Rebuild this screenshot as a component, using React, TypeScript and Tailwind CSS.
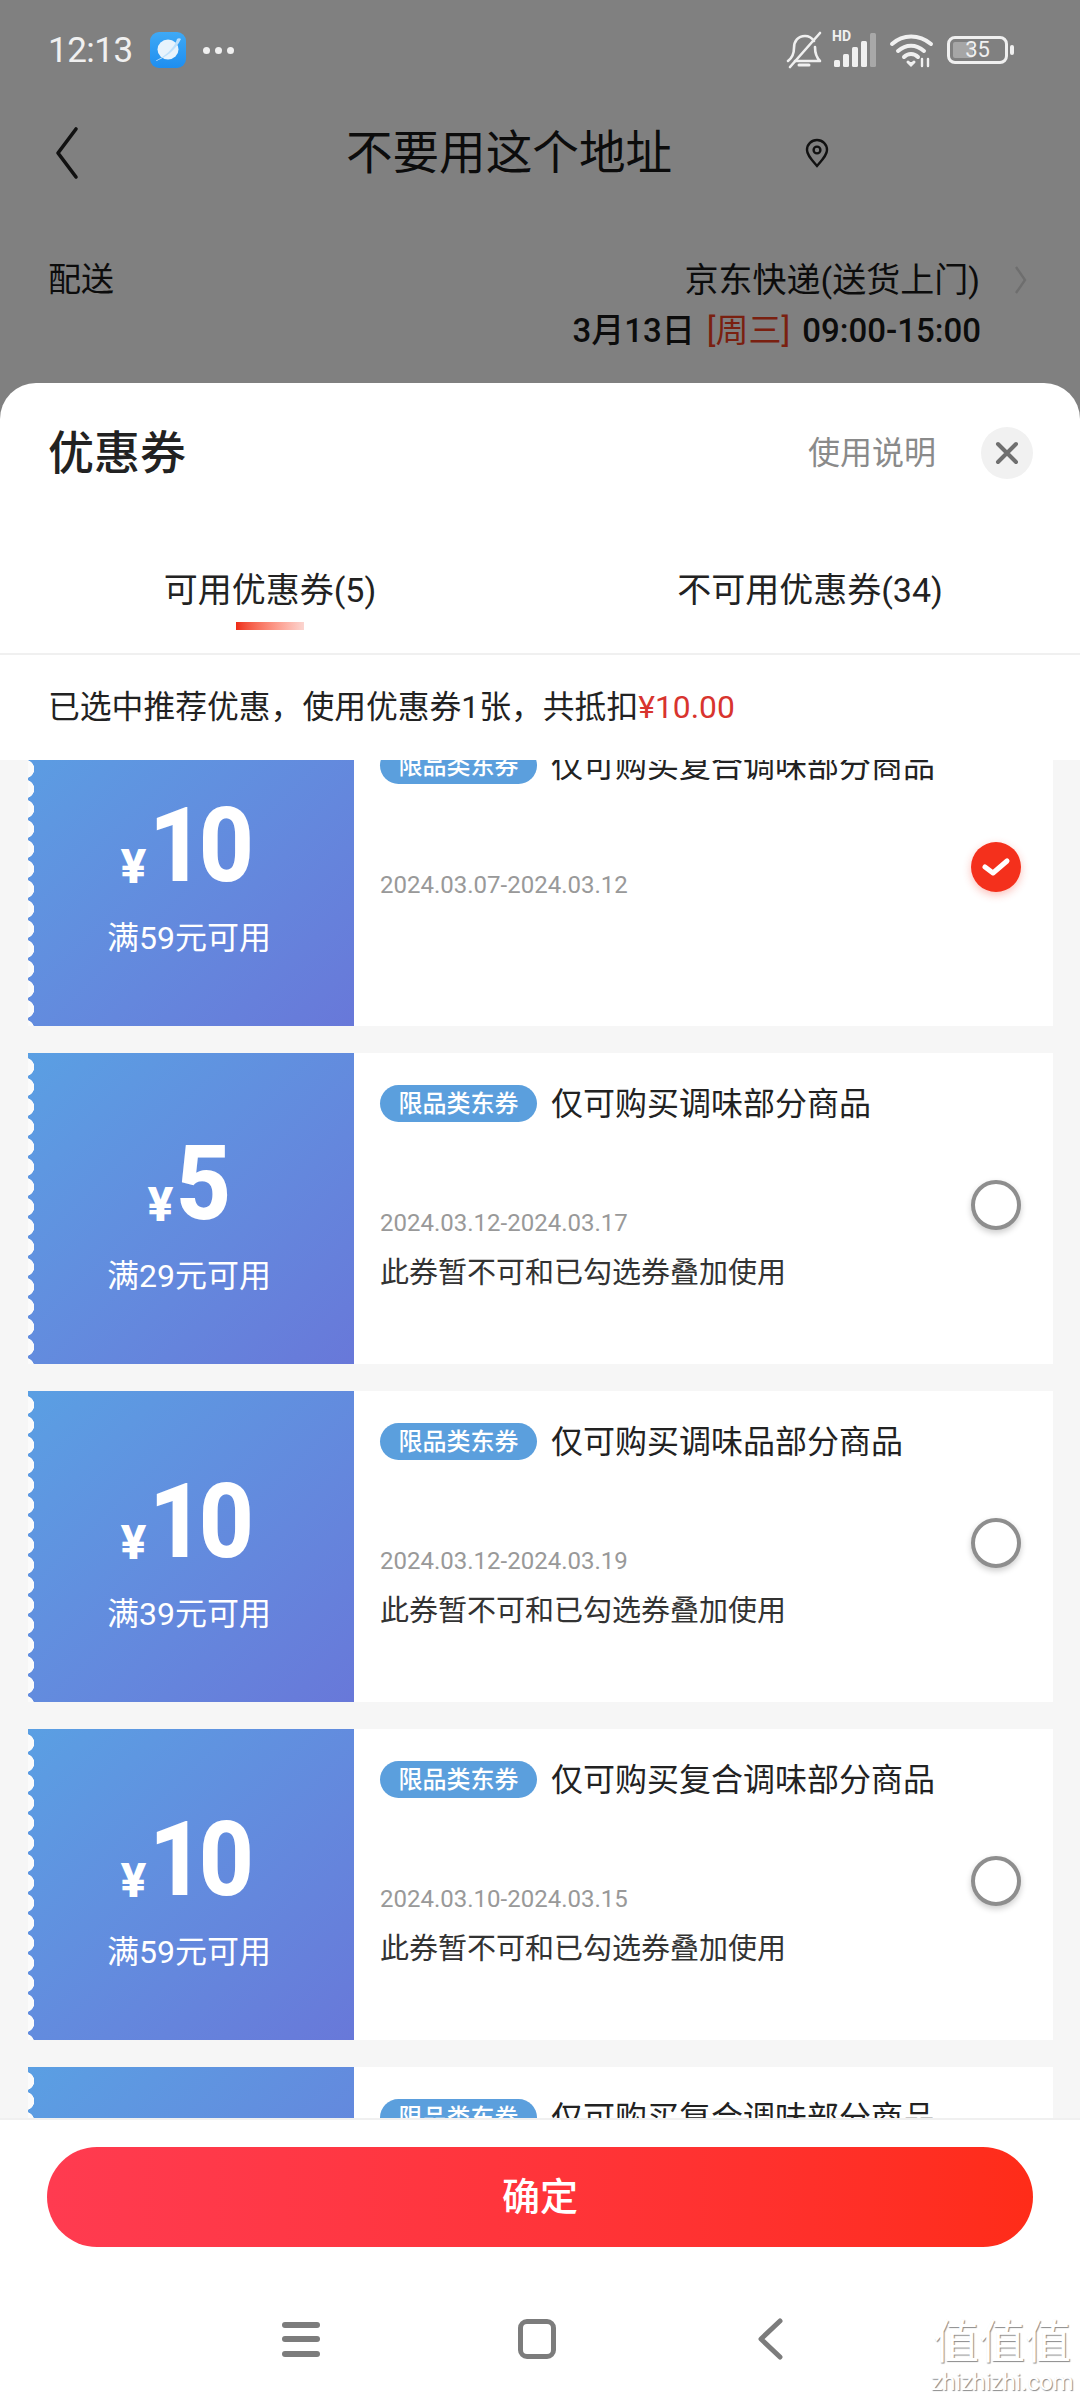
import React from "react";

const coupons = [
  { amount: "10", min: "满59元可用", title: "仅可购买复合调味部分商品", date: "2024.03.07-2024.03.12", note: "", checked: true },
  { amount: "5", min: "满29元可用", title: "仅可购买调味部分商品", date: "2024.03.12-2024.03.17", note: "此券暂不可和已勾选券叠加使用", checked: false },
  { amount: "10", min: "满39元可用", title: "仅可购买调味品部分商品", date: "2024.03.12-2024.03.19", note: "此券暂不可和已勾选券叠加使用", checked: false },
  { amount: "10", min: "满59元可用", title: "仅可购买复合调味部分商品", date: "2024.03.10-2024.03.15", note: "此券暂不可和已勾选券叠加使用", checked: false },
  { amount: "10", min: "满59元可用", title: "仅可购买复合调味部分商品", date: "2024.03.10-2024.03.15", note: "此券暂不可和已勾选券叠加使用", checked: false },
];

function StatusBar() {
  return (
    <div className="flex h-[100px] items-center justify-between pl-[48px] pr-[66px] text-[#f0f0f0]">
      <div className="flex items-center">
        <span className="text-[35px] leading-none tracking-[-0.5px]">12:13</span>
        <svg className="ml-[17px]" width="36" height="36" viewBox="0 0 36 36">
          <defs>
            <linearGradient id="pl" x1="0" y1="0" x2="0" y2="1">
              <stop offset="0" stopColor="#3fa9f5" />
              <stop offset="1" stopColor="#1e8ef0" />
            </linearGradient>
          </defs>
          <rect width="36" height="36" rx="9" fill="url(#pl)" />
          <ellipse cx="18" cy="17.5" rx="10.5" ry="10" fill="#e8f3fc" />
          <path d="M5 29 C14 27 26 18 31 7 C30 6 28 6 27 7 C25 16 14 25 5 29Z" fill="#bfe0fa" />
        </svg>
        <div className="ml-[17px] flex gap-[5px]">
          <span className="h-[7px] w-[7px] rounded-full bg-[#f0f0f0]" />
          <span className="h-[7px] w-[7px] rounded-full bg-[#f0f0f0]" />
          <span className="h-[7px] w-[7px] rounded-full bg-[#f0f0f0]" />
        </div>
      </div>
      <div className="flex items-center">
        <svg width="38" height="38" viewBox="0 0 38 38" fill="none" stroke="#f0f0f0" strokeWidth="2.6" strokeLinecap="round" strokeLinejoin="round">
          <path d="M3 30 C7 27 9 24 9 17 C9 10 13 5 20 5 C24 5 27 7 29 10" />
          <path d="M30 16 C30 24 32 27 35 30 L10 30" />
          <path d="M14 34 H24" strokeWidth="3" />
          <path d="M5 36 L35 2" />
        </svg>
        <div className="relative ml-[9px] h-[36px] w-[46px]">
          <span className="absolute left-0 top-[-4px] text-[14px] font-bold leading-[16px]">HD</span>
          <svg className="absolute left-0 top-0" width="46" height="36" viewBox="0 0 46 36" fill="#f0f0f0">
            <rect x="2" y="28" width="6" height="7" rx="1.5" />
            <rect x="11" y="22" width="6" height="13" rx="1.5" />
            <rect x="20" y="15" width="6" height="20" rx="1.5" />
            <rect x="29" y="9" width="6" height="26" rx="1.5" />
            <rect x="38" y="1" width="6" height="34" rx="1.5" fill="#a8a8a8" />
          </svg>
        </div>
        <svg className="ml-[11px]" width="46" height="36" viewBox="0 0 46 36" fill="none" stroke="#f0f0f0" strokeWidth="4" strokeLinecap="round">
          <path d="M3 12 C14 2 30 2 42 12" />
          <path d="M9 19 C17 12 27 12 35 19" />
          <path d="M15 25 C19 21 25 21 29 25" />
          <path d="M19 30 L22 33 L25 30" fill="#f0f0f0" strokeWidth="3" />
          <path d="M33 27 V34 M39 27 V34" strokeWidth="2.4" />
        </svg>
        <div className="ml-[12px] flex items-center">
          <div className="relative flex h-[28px] w-[61px] items-center justify-center overflow-hidden rounded-[8px] border-[3px] border-[#f0f0f0]">
            <span className="absolute bottom-[3px] left-[3px] top-[3px] w-[20px] rounded-[2px] bg-[#a6a6a6]" />
            <span className="relative text-[22px] leading-none">35</span>
          </div>
          <span className="ml-[2px] h-[10px] w-[4px] rounded-[2px] bg-[#f0f0f0]" />
        </div>
      </div>
    </div>
  );
}

function PageBehind() {
  return (
    <div className="h-[283px] shrink-0 text-[#0c0c0c]">
      <div className="relative flex h-[106px] items-center justify-center">
        <svg className="absolute left-[52px] top-[26px]" width="30" height="54" viewBox="0 0 30 54" fill="none" stroke="#111" strokeWidth="3.6" strokeLinecap="round" strokeLinejoin="round">
          <path d="M24 3 L6 27 L24 51" />
        </svg>
        <span className="mr-[62px] text-[46.6px] leading-none">不要用这个地址</span>
        <svg className="absolute left-[803px] top-[38px]" width="28" height="30" viewBox="0 0 28 30" fill="none" stroke="#111" strokeWidth="2.4">
          <path d="M14 28 C8 21 4 17 4 12 A10 10 0 0 1 24 12 C24 17 20 21 14 28Z" />
          <circle cx="14" cy="12" r="3.4" />
        </svg>
      </div>
      <div className="flex items-start justify-between pl-[48px] pr-[70px] pt-[53px] text-[33px] leading-[42px]">
        <span>配送</span>
        <div className="flex flex-col items-end">
          <div className="flex items-center">
            <span className="text-[34px]">京东快递(送货上门)</span>
            <svg className="ml-[34px] mr-[-18px]" width="14" height="30" viewBox="0 0 14 30" fill="none" stroke="#6e6e6e" strokeWidth="2.4">
              <path d="M2 2 L11 15 L2 28" />
            </svg>
          </div>
          <div className="mr-[29px] mt-[9px] flex items-center text-[33px] font-medium leading-[42px]">
            <span>3月13日</span>
            <span className="ml-[12px] font-normal text-[#7a2010]">[周三]</span>
            <span className="ml-[12px]">09:00-15:00</span>
          </div>
        </div>
      </div>
    </div>
  );
}

function Coupon({ c }: { c: (typeof coupons)[number] }) {
  return (
    <div className="flex h-[311px] shrink-0 bg-white">
      <div className="relative flex w-[326px] shrink-0 flex-col items-center bg-gradient-to-br from-[#5a9fe3] to-[#6878d9] pr-[4px] pt-[81px] text-white">
        <div className="absolute bottom-0 left-0 top-[4px] w-[6px] bg-[radial-gradient(circle_at_-3px_50%,#fbfbfb_9px,transparent_9.5px)] bg-[length:6px_20px]" />
        <div className="flex h-[100px] items-end">
          <span className="mb-[5px] mr-[3px] text-[48px] font-extrabold leading-none">¥</span>
          <span className="origin-left scale-x-[0.92] text-[104px] font-extrabold leading-[100px] tracking-[-6px]">{c.amount}</span>
        </div>
        <div className="mt-[22px] text-[32px] leading-[40px]">{c.min}</div>
      </div>
      <div className="flex min-w-0 flex-1 items-start justify-between pl-[26px] pr-[32px]">
        <div className="flex min-w-0 flex-col">
          <div className="mt-[32px] flex h-[37px] items-center">
            <span className="flex h-[37px] w-[157px] items-center justify-center rounded-full bg-[#5b9fdd] text-[24px] font-medium leading-none text-white">限品类东券</span>
            <span className="ml-[14px] whitespace-nowrap text-[32px] leading-none text-[#222]">{c.title}</span>
          </div>
          <div className="mt-[85px] text-[24px] leading-[32px] text-[#999]">{c.date}</div>
          {c.note && <div className="mt-[16px] text-[29px] leading-[36px] text-[#333]">{c.note}</div>}
        </div>
        {c.checked ? (
          <div className="mt-[127px] flex h-[50px] w-[50px] shrink-0 items-center justify-center rounded-full bg-[#f4301c] shadow-[0_3px_8px_rgba(244,48,28,0.3)]">
            <svg width="30" height="22" viewBox="0 0 30 22" fill="none" stroke="#fff" strokeWidth="5" strokeLinecap="round" strokeLinejoin="round">
              <path d="M4 11 L12 17 L26 5" />
            </svg>
          </div>
        ) : (
          <div className="mt-[127px] h-[50px] w-[50px] shrink-0 rounded-full border-[4px] border-[#8e8e8e] bg-white shadow-[0_3px_6px_rgba(0,0,0,0.2)]" />
        )}
      </div>
    </div>
  );
}

function Sheet() {
  return (
    <div className="flex min-h-0 flex-1 flex-col overflow-hidden rounded-t-[36px] bg-white">
      <div className="flex h-[140px] shrink-0 items-center pl-[48px] pr-[47px]">
        <span className="flex-1 text-[46px] font-medium leading-none text-[#222]">优惠券</span>
        <span className="text-[32px] leading-none text-[#8a8a8a]">使用说明</span>
        <div className="ml-[45px] flex h-[52px] w-[52px] items-center justify-center rounded-full bg-[#f1f1f1]">
          <svg width="28" height="28" viewBox="0 0 28 28" fill="none" stroke="#6f6f6f" strokeWidth="4" strokeLinecap="round">
            <path d="M5 5 L23 23 M23 5 L5 23" />
          </svg>
        </div>
      </div>
      <div className="grid h-[132px] shrink-0 grid-cols-2 border-b-2 border-[#f0f0f0] text-[34px] leading-[44px] text-[#222]">
        <div className="flex flex-col items-center pt-[45px]">
          <span>可用优惠券(5)</span>
          <span className="mt-[10px] h-[8px] w-[68px] bg-gradient-to-r from-[#ee2a14] to-[#fbd5d0]" />
        </div>
        <div className="flex flex-col items-center pt-[45px]">
          <span>不可用优惠券(34)</span>
        </div>
      </div>
      <div className="flex h-[105px] shrink-0 items-center pl-[48px] text-[31.8px] leading-none text-[#222]">
        已选中推荐优惠，使用优惠券1张，共抵扣<span className="text-[#d8342e]">¥10.00</span>
      </div>
      <div className="min-h-0 flex-1 overflow-hidden bg-[#f6f6f6] pl-[28px] pr-[27px]">
        <div className="mt-[-45px] flex flex-col gap-[27px]">
          {coupons.map((c, i) => (
            <Coupon key={i} c={c} />
          ))}
        </div>
      </div>
      <div className="relative h-[282px] shrink-0 border-t-2 border-[#f0f0f0] bg-white">
        <div className="mx-[47px] mt-[27px] flex h-[100px] items-center justify-center rounded-full bg-gradient-to-r from-[#ff3b50] to-[#ff2c18] text-[38px] font-medium leading-none text-white">
          确定
        </div>
        <div className="mr-[18px] mt-[71px] flex h-[42px] items-center justify-center">
          <div className="flex h-[35px] w-[38px] flex-col justify-between">
            <span className="h-[6px] rounded-full bg-[#7c7c7c]" />
            <span className="h-[6px] rounded-full bg-[#7c7c7c]" />
            <span className="h-[6px] rounded-full bg-[#7c7c7c]" />
          </div>
          <div className="ml-[198px] h-[40px] w-[38px] rounded-[9px] border-[5px] border-[#7c7c7c]" />
          <svg className="ml-[200px] mr-[-4px]" width="28" height="42" viewBox="0 0 28 42" fill="none" stroke="#7c7c7c" strokeWidth="5" strokeLinecap="round" strokeLinejoin="round">
            <path d="M24 3 L5 21 L24 39" />
          </svg>
        </div>
        <div className="absolute left-[930px] top-[196px] flex w-[144px] flex-col items-center text-white [text-shadow:1px_1px_1px_#8a8a8a]">
          <span className="text-[46px] leading-[52px]">值值值</span>
          <span className="mt-[2px] text-[24px] leading-[24px] tracking-[-0.3px]">zhizhizhi.com</span>
        </div>
      </div>
    </div>
  );
}

export default function App() {
  return (
    <div className="flex h-[2400px] w-[1080px] flex-col overflow-hidden bg-[#808080] font-['Roboto','Noto_Sans_CJK_SC',sans-serif]">
      <StatusBar />
      <PageBehind />
      <Sheet />
    </div>
  );
}
